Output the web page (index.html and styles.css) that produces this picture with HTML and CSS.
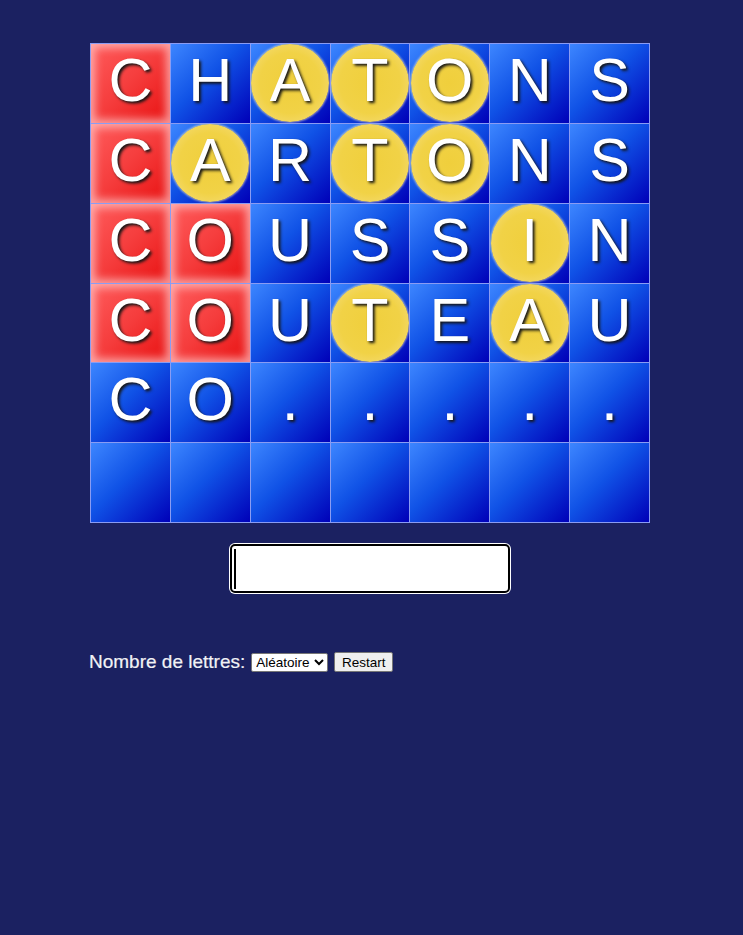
FILE: index.html
```html
<!DOCTYPE html>
<html lang="fr">
<head>
<meta charset="utf-8">
<title>Motus</title>
<link rel="stylesheet" href="styles.css">
</head>
<body>
<div class="page">
  <div class="board">
    <div class="cell red">C</div><div class="cell">H</div><div class="cell yellow"><span>A</span></div><div class="cell yellow"><span>T</span></div><div class="cell yellow"><span>O</span></div><div class="cell">N</div><div class="cell">S</div>
    <div class="cell red">C</div><div class="cell yellow"><span>A</span></div><div class="cell">R</div><div class="cell yellow"><span>T</span></div><div class="cell yellow"><span>O</span></div><div class="cell">N</div><div class="cell">S</div>
    <div class="cell red">C</div><div class="cell red">O</div><div class="cell">U</div><div class="cell">S</div><div class="cell">S</div><div class="cell yellow"><span>I</span></div><div class="cell">N</div>
    <div class="cell red">C</div><div class="cell red">O</div><div class="cell">U</div><div class="cell yellow"><span>T</span></div><div class="cell">E</div><div class="cell yellow"><span>A</span></div><div class="cell">U</div>
    <div class="cell">C</div><div class="cell">O</div><div class="cell">.</div><div class="cell">.</div><div class="cell">.</div><div class="cell">.</div><div class="cell">.</div>
    <div class="cell"></div><div class="cell"></div><div class="cell"></div><div class="cell"></div><div class="cell"></div><div class="cell"></div><div class="cell"></div>
  </div>
  <div class="entry">
    <div class="field">
      <span class="caret"></span>
      <input class="guess" type="text">
    </div>
  </div>
  <div class="controls">
    <label class="label">Nombre de lettres:</label>
    <select class="sel"><option>Aléatoire</option></select>
    <button class="btn">Restart</button>
  </div>
</div>
</body>
</html>
```
FILE: styles.css
```css
html, body {
  margin: 0;
  padding: 0;
  background: #1b2161;
  height: 100%;
}
body {
  font-family: "Liberation Sans", Arial, sans-serif;
}
.page {
  padding: 43px 0 0 90px;
}
.board {
  box-sizing: border-box;
  display: grid;
  grid-template-columns: repeat(7, 1fr);
  grid-template-rows: repeat(6, 1fr);
  gap: 1px;
  width: 560px;
  height: 480px;
  background: #8a9cf3;
  border: 1px solid #8a9cf3;
}
.cell {
  background: linear-gradient(135deg, #3d86ff 0%, #1052e6 45%, #0000b8 100%);
  color: #fff;
  font-size: 61px;
  line-height: 73px;
  text-align: center;
  text-shadow: 2px 2px 3px #161616;
  overflow: hidden;
}
.cell.red {
  background-image: linear-gradient(135deg, #ff5c5c 0%, #f53c3c 50%, #e81010 100%);
  box-shadow: inset 0 0 9px 4px rgba(255, 205, 205, 0.7);
}
.cell.yellow {
  display: flex;
  align-items: center;
  justify-content: center;
}
.cell.yellow span {
  width: 78px;
  height: 78px;
  flex: none;
  border-radius: 50%;
  background: radial-gradient(circle at 50% 50%, #f0cf3c 0%, #f1d246 55%, #f4da6e 82%, #f8e8a8 100%);
  box-shadow: 0 0 2px 1px rgba(255, 240, 190, 0.55);
  line-height: 73px;
  display: block;
}
.entry {
  display: flex;
  justify-content: center;
  width: 560px;
  margin-top: 21px;
}
.field {
  display: flex;
  align-items: center;
  width: 272px;
  height: 45px;
  border: 2px solid #000;
  border-radius: 5px;
  background: #fff;
  box-shadow: 0 0 0 1px #fff;
  padding: 0 2px;
}
.caret {
  width: 2px;
  height: 40px;
  background: #000;
  flex: none;
}
.guess {
  flex: 1;
  min-width: 0;
  height: 40px;
  border: none;
  outline: none;
  background: transparent;
  padding: 0;
  margin: 0;
  font-size: 28px;
  font-family: "Liberation Sans", Arial, sans-serif;
}
.controls {
  margin-top: 58px;
  margin-left: -1px;
  display: flex;
  align-items: center;
  gap: 5px;
}
.label {
  color: #f2f2f6;
  font-size: 19px;
  margin-right: 1px;
  -webkit-text-stroke: 0.2px #f2f2f6;
}
.sel {
  font-family: "Liberation Sans", Arial, sans-serif;
  font-size: 13.5px;
  height: 19px;
  width: 77px;
  padding: 0;
  border: 1px solid #767676;
  border-radius: 2px;
  background: #fff;
  color: #000;
}
.btn {
  font-family: "Liberation Sans", Arial, sans-serif;
  font-size: 13.5px;
  height: 20px;
  width: 59px;
  padding: 1px 6px;
  border: 1px solid #767676;
  border-radius: 2px;
  background: #efefef;
  color: #000;
  margin-left: 1px;
}
```
